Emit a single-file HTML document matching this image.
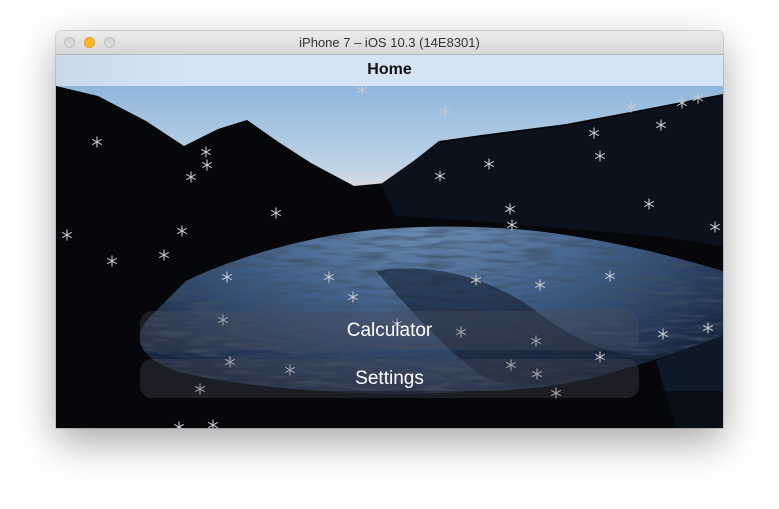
<!DOCTYPE html>
<html><head><meta charset="utf-8"><style>
html,body{margin:0;padding:0;width:779px;height:509px;background:#fff;overflow:hidden;font-family:"Liberation Sans",sans-serif}
.win{position:absolute;left:56px;top:31px;width:667px;height:397px;box-shadow:0 14px 40px rgba(0,0,0,.35),0 0 0 1px rgba(0,0,0,.12);border-radius:5px 5px 0 0;overflow:hidden}
.tb{position:absolute;left:0;top:0;width:667px;height:23px;background:linear-gradient(#ececec,#d6d6d6);border-bottom:1px solid #b8b8b8;text-align:center;font-size:13px;line-height:23px;color:#333}
.dot{position:absolute;top:6px;width:11px;height:11px;border-radius:50%;background:#d8d8d8;border:1px solid #c0c0c0;box-sizing:border-box}
.nav{position:absolute;left:0;top:24px;width:667px;height:31px;background:linear-gradient(90deg,#c9d9ea,#d4e4f4 20%,#d4e4f4);border-bottom:1px solid #9aa9b8;text-align:center;font-weight:bold;font-size:16px;line-height:30px;color:#111}
.c{position:absolute;left:0;top:55px;width:667px;height:342px;background:#05070b}
.btn{position:absolute;left:84px;width:499px;height:39px;border-radius:12px;background:rgba(80,80,92,.33);color:#fff;text-align:center;font-size:19px;line-height:39px}
</style></head><body>
<div class="win">
<div class="tb"><div class="dot" style="left:8px"></div><div class="dot" style="left:28px;background:#fdb827;border-color:#de9f1f"></div><div class="dot" style="left:48px"></div>iPhone 7 – iOS 10.3 (14E8301)</div>
<div class="nav">Home</div>
<div class="c">
<svg width="667" height="342" viewBox="0 0 667 342">
<defs>
<linearGradient id="sky" x1="0" y1="0" x2="0" y2="1"><stop offset="0" stop-color="#8fb6dc"/><stop offset=".75" stop-color="#c0d4e6"/><stop offset="1" stop-color="#e6dcd8"/></linearGradient>
<radialGradient id="w" cx=".55" cy=".35" r=".6"><stop offset="0" stop-color="#7596bd"/><stop offset=".5" stop-color="#42608a"/><stop offset="1" stop-color="#15233a"/></radialGradient>
<filter id="t" x="0" y="0" width="100%" height="100%"><feTurbulence type="fractalNoise" baseFrequency="0.03 0.22" numOctaves="2" seed="3"/><feColorMatrix values="0 0 0 0 0.05  0 0 0 0 0.08  0 0 0 0 0.13  0 0 0 -2.2 1.3"/></filter>
<clipPath id="cw"><path d="M130,195 C180,170 260,150 300,146 C360,138 430,140 480,145 C540,152 600,165 667,185 L667,250 C630,262 600,275 560,285 C520,298 470,305 420,305 C330,312 200,305 120,285 C80,270 75,250 95,230 Z"/></clipPath>
<symbol id="s" viewBox="-6 -6 12 12"><g stroke="#c9c9cf" stroke-width="1.1"><line x1="0" y1="-5.5" x2="0" y2="5.5"/><line x1="-4.8" y1="-2.7" x2="4.8" y2="2.7"/><line x1="-4.8" y1="2.7" x2="4.8" y2="-2.7"/></g></symbol>
</defs>
<rect width="667" height="110" fill="url(#sky)"/>
<polygon fill="#05070b" points="0,0 42,10 90,35 128,60 162,43 191,34 221,55 255,77 298,100 330,97 383,55 425,49 510,38 574,26 667,8 667,342 0,342"/>
<polygon fill="#0b121c" points="325,98 383,57 425,51 510,40 574,28 667,10 667,160 600,150 420,135 340,130"/>
<g clip-path="url(#cw)">
<rect width="667" height="342" fill="url(#w)"/>
<rect x="0" y="130" width="667" height="190" filter="url(#t)" opacity=".8"/>
<path fill="#0f1a29" opacity=".55" d="M320,185 C380,175 440,195 480,225 C520,255 560,275 610,268 C560,300 470,308 430,292 C395,270 355,225 320,185Z"/>
</g>
<path fill="#1c2f48" opacity=".45" d="M600,275 C630,262 650,255 667,250 L667,342 L620,342Z"/>
<rect x="0" y="305" width="667" height="37" fill="#05070b" opacity=".55"/>
<g>
<use href="#s" x="35" y="50" width="12" height="12"/><use href="#s" x="129" y="85" width="12" height="12"/><use href="#s" x="145" y="73" width="12" height="12"/><use href="#s" x="144" y="60" width="12" height="12"/><use href="#s" x="214" y="121" width="12" height="12"/><use href="#s" x="120" y="139" width="12" height="12"/><use href="#s" x="5" y="143" width="12" height="12"/><use href="#s" x="50" y="169" width="12" height="12"/><use href="#s" x="102" y="163" width="12" height="12"/><use href="#s" x="165" y="185" width="12" height="12"/><use href="#s" x="267" y="185" width="12" height="12"/><use href="#s" x="291" y="205" width="12" height="12"/><use href="#s" x="161" y="228" width="12" height="12"/><use href="#s" x="168" y="270" width="12" height="12"/><use href="#s" x="228" y="278" width="12" height="12"/><use href="#s" x="138" y="297" width="12" height="12"/><use href="#s" x="117" y="335" width="12" height="12"/><use href="#s" x="151" y="333" width="12" height="12"/><use href="#s" x="300" y="-2" width="12" height="12"/><use href="#s" x="383" y="20" width="12" height="12"/><use href="#s" x="427" y="72" width="12" height="12"/><use href="#s" x="378" y="84" width="12" height="12"/><use href="#s" x="448" y="117" width="12" height="12"/><use href="#s" x="450" y="133" width="12" height="12"/><use href="#s" x="532" y="41" width="12" height="12"/><use href="#s" x="538" y="64" width="12" height="12"/><use href="#s" x="569" y="15" width="12" height="12"/><use href="#s" x="599" y="33" width="12" height="12"/><use href="#s" x="620" y="11" width="12" height="12"/><use href="#s" x="636" y="6" width="12" height="12"/><use href="#s" x="587" y="112" width="12" height="12"/><use href="#s" x="653" y="135" width="12" height="12"/><use href="#s" x="548" y="184" width="12" height="12"/><use href="#s" x="478" y="193" width="12" height="12"/><use href="#s" x="414" y="188" width="12" height="12"/><use href="#s" x="335" y="232" width="12" height="12"/><use href="#s" x="399" y="240" width="12" height="12"/><use href="#s" x="474" y="249" width="12" height="12"/><use href="#s" x="538" y="265" width="12" height="12"/><use href="#s" x="449" y="273" width="12" height="12"/><use href="#s" x="475" y="282" width="12" height="12"/><use href="#s" x="494" y="301" width="12" height="12"/><use href="#s" x="601" y="242" width="12" height="12"/><use href="#s" x="646" y="236" width="12" height="12"/>
</g>
</svg>
<div class="btn" style="top:225px">Calculator</div>
<div class="btn" style="top:273px">Settings</div>
</div>
</div>
</body></html>
